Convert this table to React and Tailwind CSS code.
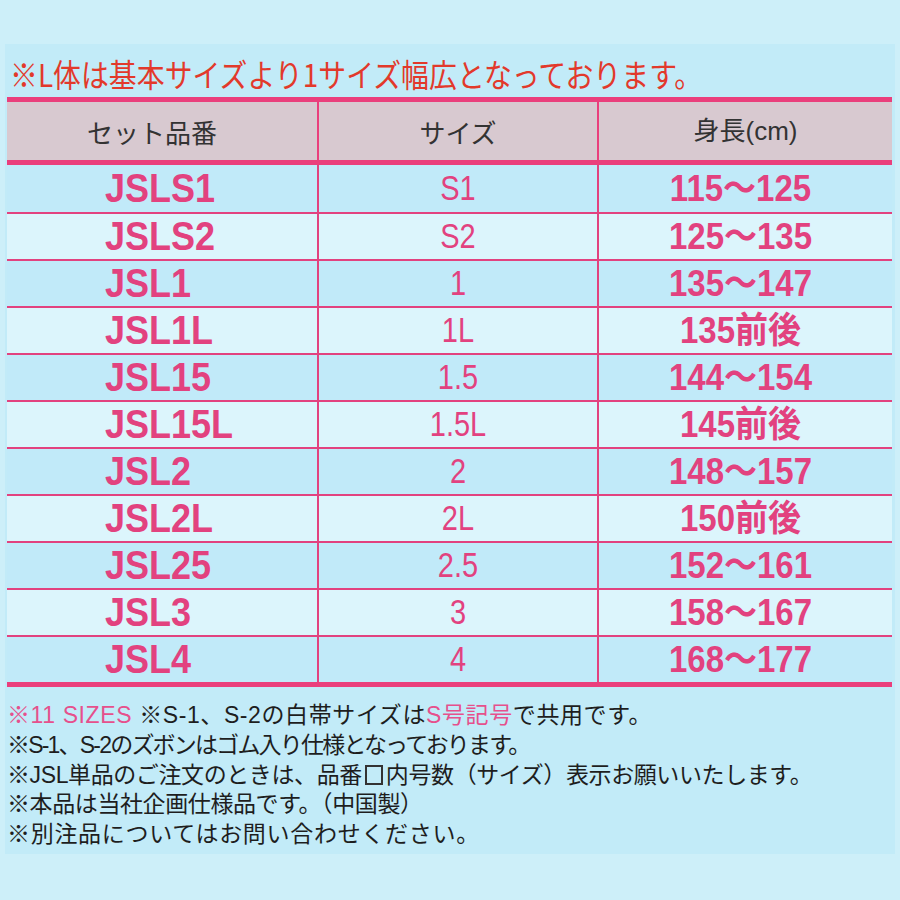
import React from 'react';

const rows = [
  ['JSLS1', 'S1', '115〜125'],
  ['JSLS2', 'S2', '125〜135'],
  ['JSL1', '1', '135〜147'],
  ['JSL1L', '1L', '135前後'],
  ['JSL15', '1.5', '144〜154'],
  ['JSL15L', '1.5L', '145前後'],
  ['JSL2', '2', '148〜157'],
  ['JSL2L', '2L', '150前後'],
  ['JSL25', '2.5', '152〜161'],
  ['JSL3', '3', '158〜167'],
  ['JSL4', '4', '168〜177'],
];

const jp = "font-['Noto_Sans_CJK_JP',sans-serif]";
const arial = "font-['Liberation_Sans','Noto_Sans_CJK_JP',sans-serif]";

const App = () => {
  return (
    <div className="w-[900px] h-[900px] bg-[#cdeff9] pt-[44px] px-[5px] overflow-hidden">
      <div className="bg-[#c2ebf8] h-[810px]">
        {/* title */}
        <div className="h-[53px] flex items-center pl-[5px] pt-[4px]">
          <span className={`${jp} inline-block origin-left scale-x-[0.93] scale-y-[1.05] text-[30px] whitespace-nowrap text-[#e2392b] leading-none`}>
            ※L体は基本サイズより1サイズ幅広となっております。
          </span>
        </div>

        {/* size table */}
        <div className="ml-[2px] mr-[3px] border-t-[5px] border-b-[5px] border-[#ea3f7c]">
          <div className="grid grid-cols-[312px_280px_1fr] h-[63px] bg-[#d8c9d0] border-b-[5px] border-[#ea3f7c] text-[#333]">
            <div className={`${jp} border-r-2 border-[#ea3f7c] flex items-center justify-center pr-[20px] text-[26px]`}>セット品番</div>
            <div className={`${jp} border-r-2 border-[#ea3f7c] flex items-center justify-center text-[26px]`}>サイズ</div>
            <div className={`${arial} flex items-center justify-center text-[26px]`}>身長(cm)</div>
          </div>
          {rows.map((r, i) => (
            <div
              key={r[0]}
              className={`grid grid-cols-[312px_280px_1fr] h-[47px] text-[#e2427f] ${i > 0 ? 'border-t-2 border-[#e2427f]' : ''} ${i % 2 === 0 ? 'bg-[#c1eaf9]' : 'bg-[#dcf5fc]'}`}
            >
              <div className={`${arial} border-r-2 border-[#e2427f] flex items-center pl-[98px] text-[36px] font-bold leading-none`}>
                <span className="inline-block scale-y-[1.12]">{r[0]}</span>
              </div>
              <div className={`${arial} border-r-2 border-[#e2427f] flex items-center justify-center text-[29px] leading-none`}>
                <span className="inline-block scale-y-[1.18]">{r[1]}</span>
              </div>
              <div className={`${arial} flex items-center justify-center pr-[10px] text-[33px] font-bold leading-none`}>
                <span className="inline-block scale-y-[1.1]">{r[2]}</span>
              </div>
            </div>
          ))}
        </div>

        {/* notes */}
        <div className={`${arial} pl-[2px] pt-[14px] text-[23px] leading-[29.8px] text-[#1e1e1e] whitespace-nowrap`}>
          <p className="tracking-[0.6px]">
            <span className="text-[#e6508c]">※11 SIZES</span> ※S-1、S-2の白帯サイズは<span className="text-[#e6508c]">S号記号</span>で共用です。
          </p>
          <p className="tracking-[-1.8px]">※S-1、S-2のズボンはゴム入り仕様となっております。</p>
          <p className="flex items-center tracking-[-0.4px]">
            ※JSL単品のご注文のときは、品番
            <span className="inline-block w-[18px] h-[20px] border-2 border-[#333] mx-[3px]"></span>
            内号数（サイズ）表示お願いいたします。
          </p>
          <p className="tracking-[-0.4px]">※本品は当社企画仕様品です。（中国製）</p>
          <p className="tracking-[0.7px]">※別注品についてはお問い合わせください。</p>
        </div>
      </div>
    </div>
  );
};

export default App;
